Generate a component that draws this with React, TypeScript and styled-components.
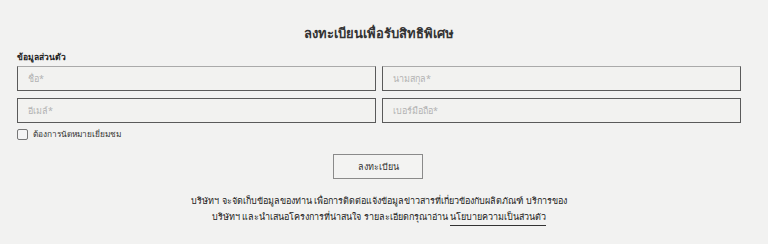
import React from "react";
import styled, { createGlobalStyle } from "styled-components";

const GlobalStyle = createGlobalStyle`
  html, body {
    margin: 0;
    padding: 0;
    background: #f2f2f1;
  }
  body {
    font-family: "Noto Sans", "Liberation Sans", sans-serif;
    color: #333;
  }
`;

const Section = styled.section`
  width: 768px;
  height: 244px;
  box-sizing: border-box;
  padding: 23px 27px 0 17px;
  background: #f2f2f1;
`;

const Title = styled.h2`
  margin: 0 0 8px;
  text-align: center;
  font-size: 13px;
  line-height: 20px;
  font-weight: 700;
  color: #333;
`;

const GroupLabel = styled.div`
  font-size: 8.5px;
  line-height: 12px;
  font-weight: 700;
  color: #222;
  margin-bottom: 3px;
`;

const Grid = styled.div`
  display: grid;
  grid-template-columns: 1fr 1fr;
  column-gap: 6px;
  row-gap: 7px;
`;

const Field = styled.input<{ $top?: boolean }>`
  box-sizing: border-box;
  height: 25px;
  width: 100%;
  margin: 0;
  padding: 0 10px;
  background: #f2f2f0;
  border: 1px solid #5a5a5a;
  border-top-color: ${(p) => (p.$top ? "#aaa" : "#5a5a5a")};
  border-radius: 0;
  font-family: inherit;
  font-size: 9px;
  color: #333;
  outline: none;

  &::placeholder {
    color: #b3b3b3;
  }
`;

const CheckRow = styled.label`
  display: flex;
  align-items: center;
  gap: 5px;
  margin-top: 5px;
  font-size: 8.3px;
  line-height: 12px;
  color: #333;
`;

const Box = styled.span`
  display: inline-block;
  width: 9px;
  height: 9px;
  border: 1px solid #777;
  border-radius: 2px;
  background: #f5f5f5;
`;

const Actions = styled.div`
  display: flex;
  justify-content: center;
  margin-top: 14px;
  padding-right: 2px;
`;

const Submit = styled.button`
  width: 90px;
  height: 25px;
  border: 1px solid #8a8a8a;
  background: #f3f3f2;
  font-family: inherit;
  font-size: 9px;
  color: #333;
  cursor: pointer;
`;

const Notice = styled.p`
  margin: 14px 0 0;
  text-align: center;
  font-size: 9px;
  line-height: 16px;
  color: #222;
`;

const PolicyLink = styled.a`
  color: #222;
  text-decoration: none;
  border-bottom: 1px solid #333;
  padding-bottom: 2px;
`;

export default function App() {
  return (
    <>
      <GlobalStyle />
      <Section>
        <Title>ลงทะเบียนเพื่อรับสิทธิพิเศษ</Title>
        <GroupLabel>ข้อมูลส่วนตัว</GroupLabel>
        <Grid>
          <Field $top placeholder="ชื่อ*" />
          <Field $top placeholder="นามสกุล*" />
          <Field placeholder="อีเมล์*" />
          <Field placeholder="เบอร์มือถือ*" />
        </Grid>
        <CheckRow>
          <Box />
          ต้องการนัดหมายเยี่ยมชม
        </CheckRow>
        <Actions>
          <Submit>ลงทะเบียน</Submit>
        </Actions>
        <Notice>
          บริษัทฯ จะจัดเก็บข้อมูลของท่าน เพื่อการติดต่อแจ้งข้อมูลข่าวสารที่เกี่ยวข้องกับผลิตภัณฑ์ บริการของ
          <br />
          บริษัทฯ และนำเสนอโครงการที่น่าสนใจ รายละเอียดกรุณาอ่าน{" "}
          <PolicyLink href="#">นโยบายความเป็นส่วนตัว</PolicyLink>
        </Notice>
      </Section>
    </>
  );
}
